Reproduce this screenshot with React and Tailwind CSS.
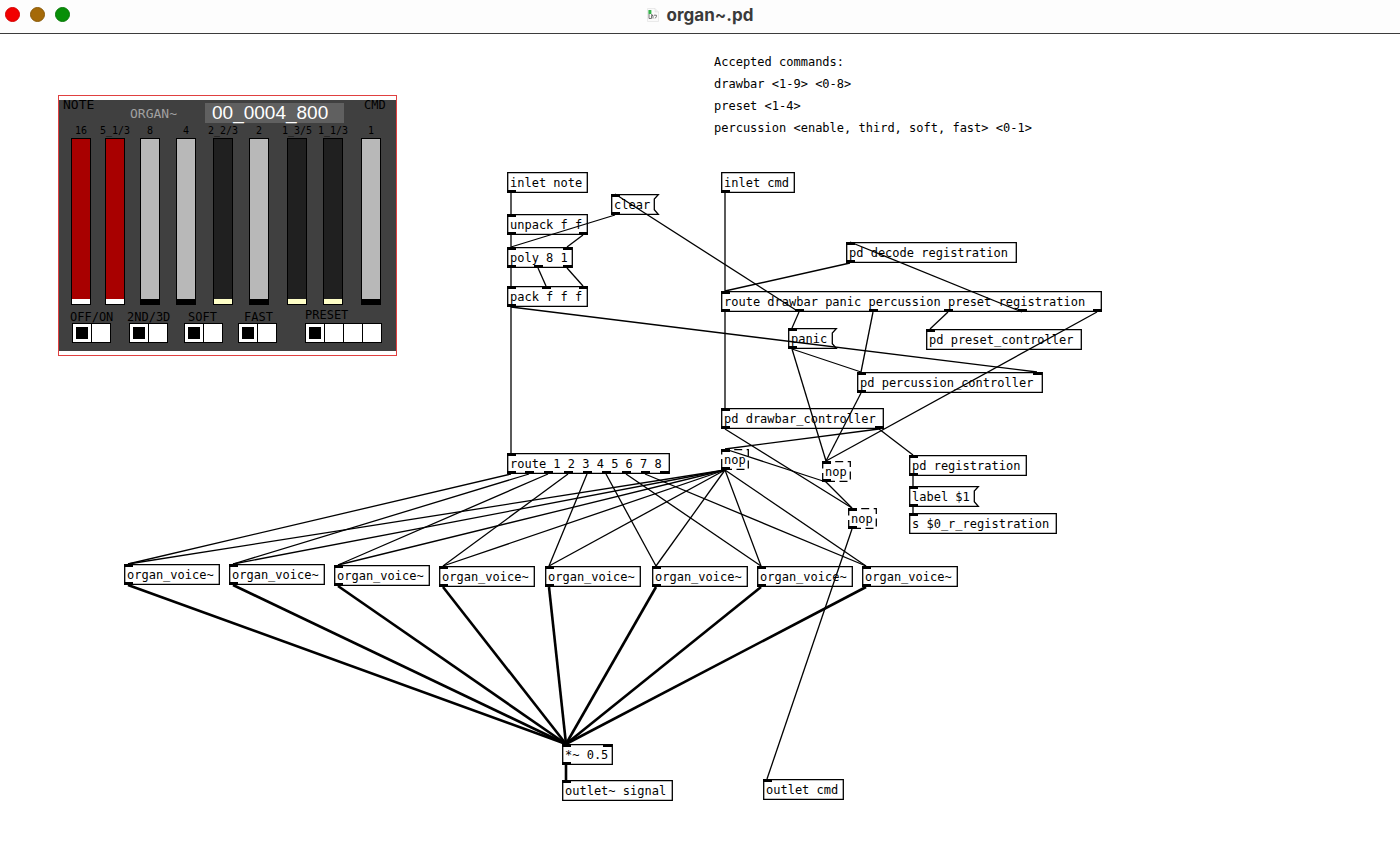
import React from "react";

const BOX_HEIGHT = 21;
const PORT_CENTER = 4;

const voices = [
  [124, 530],
  [229, 530],
  [334, 531],
  [439, 532],
  [545, 532],
  [652, 532],
  [757, 532],
  [862, 532],
].map(([x, y], i) => ({
  id: `voice${i}`,
  text: "organ_voice~",
  x,
  y,
  w: 96,
  ins: [0],
  outs: [0],
}));

const nodes = [
  { id: "inletNote", text: "inlet note", x: 507, y: 138, w: 81, ins: [], outs: [0] },
  { id: "clear", text: "clear", kind: "message", x: 611, y: 160, w: 48, ins: [0], outs: [0] },
  { id: "unpack", text: "unpack f f", x: 507, y: 180, w: 81, ins: [0], outs: [0, 72] },
  { id: "poly", text: "poly 8 1", x: 507, y: 213, w: 66, ins: [0, 56], outs: [0, 27, 56] },
  { id: "pack", text: "pack f f f", x: 507, y: 252, w: 81, ins: [0, 35, 72], outs: [0] },
  { id: "inletCmd", text: "inlet cmd", x: 721, y: 138, w: 74, ins: [], outs: [0] },
  { id: "decode", text: "pd decode registration", x: 846, y: 208, w: 171, ins: [0], outs: [0] },
  {
    id: "routeCmd",
    text: "route drawbar panic percussion preset registration",
    x: 721,
    y: 257,
    w: 381,
    ins: [0],
    outs: [0, 74, 148, 223, 297, 372],
  },
  { id: "panic", text: "panic", kind: "message", x: 788, y: 294, w: 49, ins: [0], outs: [0] },
  { id: "preset", text: "pd preset_controller", x: 926, y: 295, w: 156, ins: [0], outs: [] },
  { id: "percussion", text: "pd percussion_controller", x: 857, y: 338, w: 186, ins: [0, 176], outs: [0] },
  { id: "drawbar", text: "pd drawbar_controller", x: 721, y: 374, w: 163, ins: [0], outs: [0, 154] },
  { id: "nopA", text: "nop", kind: "dashed", x: 721, y: 415, w: 28, ins: [0], outs: [0] },
  { id: "nopB", text: "nop", kind: "dashed", x: 822, y: 427, w: 29, ins: [0], outs: [0] },
  { id: "nopC", text: "nop", kind: "dashed", x: 848, y: 474, w: 29, ins: [0], outs: [0] },
  { id: "registration", text: "pd registration", x: 909, y: 421, w: 118, ins: [0], outs: [0] },
  { id: "label", text: "label $1", kind: "message", x: 909, y: 452, w: 70, ins: [0], outs: [0] },
  { id: "send", text: "s $0_r_registration", x: 909, y: 479, w: 148, ins: [0], outs: [] },
  {
    id: "routeVoice",
    text: "route 1 2 3 4 5 6 7 8",
    x: 507,
    y: 419,
    w: 163,
    ins: [0],
    outs: [0, 18, 37, 57, 76, 95, 115, 134, 153],
  },
  ...voices,
  { id: "gain", text: "*~ 0.5", x: 562, y: 710, w: 51, ins: [0, 41], outs: [0] },
  { id: "outletSignal", text: "outlet~ signal", x: 562, y: 746, w: 111, ins: [0], outs: [] },
  { id: "outletCmd", text: "outlet cmd", x: 763, y: 745, w: 81, ins: [0], outs: [] },
];

const byId = Object.fromEntries(nodes.map((n) => [n.id, n]));

// Each cable is [source, outlet, target, inlet].
const cables = [
  ["inletNote", 0, "unpack", 0],
  ["unpack", 0, "poly", 0],
  ["unpack", 1, "poly", 1],
  ["clear", 0, "poly", 0],
  ["poly", 0, "pack", 0],
  ["poly", 1, "pack", 1],
  ["poly", 2, "pack", 2],
  ["pack", 0, "routeVoice", 0],
  ["pack", 0, "percussion", 1],
  ["inletCmd", 0, "routeCmd", 0],
  ["decode", 0, "routeCmd", 0],
  ["routeCmd", 0, "drawbar", 0],
  ["routeCmd", 1, "panic", 0],
  ["routeCmd", 1, "clear", 0],
  ["routeCmd", 2, "percussion", 0],
  ["routeCmd", 3, "preset", 0],
  ["routeCmd", 4, "decode", 0],
  ["routeCmd", 5, "nopB", 0],
  ["panic", 0, "percussion", 0],
  ["panic", 0, "nopB", 0],
  ["percussion", 0, "nopB", 0],
  ["drawbar", 0, "nopC", 0],
  ["drawbar", 1, "nopA", 0],
  ["drawbar", 1, "registration", 0],
  ["nopB", 0, "nopA", 0],
  ["nopB", 0, "nopC", 0],
  ["nopC", 0, "outletCmd", 0],
  ["registration", 0, "label", 0],
  ["label", 0, "send", 0],
  ...voices.map((v, i) => ["routeVoice", i, v.id, 0]),
  ...voices.map((v) => ["nopA", 0, v.id, 0]),
];

const signalCables = [
  ...voices.map((v) => [v.id, 0, "gain", 0]),
  ["gain", 0, "outletSignal", 0],
];

function Cable({ cable, signal }) {
  const [from, out, to, inlet] = cable;
  const a = byId[from];
  const b = byId[to];
  return (
    <line
      x1={a.x + a.outs[out] + PORT_CENTER}
      y1={a.y + BOX_HEIGHT}
      x2={b.x + b.ins[inlet] + PORT_CENTER}
      y2={b.y}
      stroke="black"
      strokeWidth={signal ? 2.6 : 1.3}
    />
  );
}

function Outline({ kind, w }) {
  const r = w - 0.7;
  const b = BOX_HEIGHT - 0.7;
  const n = r - 4;
  const d =
    kind === "message"
      ? `M.7 .7H${r}L${n} 5V${b - 4.5}L${r} ${b}H.7Z`
      : `M.7 .7H${r}V${b}H.7Z`;
  return (
    <svg className="absolute inset-0 size-full overflow-visible" aria-hidden="true">
      <path
        d={d}
        fill="none"
        stroke="black"
        strokeWidth="1.3"
        strokeDasharray={kind === "dashed" ? "8 4.5" : undefined}
      />
    </svg>
  );
}

function Node({ node }) {
  return (
    <div
      className="absolute flex h-[21px] items-center pl-[3px] whitespace-pre"
      style={{ left: node.x, top: node.y, width: node.w }}
    >
      <Outline kind={node.kind} w={node.w} />
      {node.ins.map((x) => (
        <i key={`in${x}`} className="absolute top-0 h-[3px] w-[9px] bg-black" style={{ left: x }} />
      ))}
      {node.outs.map((x) => (
        <i key={`out${x}`} className="absolute bottom-0 h-[3px] w-[9px] bg-black" style={{ left: x }} />
      ))}
      <span>{node.text}</span>
    </div>
  );
}

const RED = "bg-[#a80000] [&::-webkit-slider-thumb]:bg-white";
const LIGHT = "bg-[#b8b8b8] [&::-webkit-slider-thumb]:bg-black";
const DARK = "bg-[#202020] [&::-webkit-slider-thumb]:bg-[#ffffc8]";

const drawbars = [
  ["16", RED],
  ["5_1/3", RED],
  ["8", LIGHT],
  ["4", LIGHT],
  ["2_2/3", DARK],
  ["2", LIGHT],
  ["1_3/5", DARK],
  ["1_1/3", DARK],
  ["1", LIGHT],
];

const switches = [
  ["OFF/ON", 2, "-ml-0.5"],
  ["2ND/3D", 2, "-ml-0.5"],
  ["SOFT", 2, "ml-1"],
  ["FAST", 2, "ml-1.5"],
  ["PRESET", 4, "relative bottom-0.5"],
];

function Drawbar({ name, color }) {
  const id = `drawbar-${name.replace("/", "-")}`;
  return (
    <div className="flex w-5 flex-col items-center">
      <label htmlFor={id} className="text-[10px] leading-[14px] whitespace-nowrap">
        {name}
      </label>
      <input
        id={id}
        type="range"
        min="0"
        max="8"
        defaultValue="0"
        className={`h-[167px] w-5 appearance-none border border-black [direction:rtl] [writing-mode:vertical-lr] [&::-webkit-slider-thumb]:h-[5px] [&::-webkit-slider-thumb]:w-[18px] [&::-webkit-slider-thumb]:appearance-none ${color}`}
      />
    </div>
  );
}

function Switch({ name, count, labelClass }) {
  const id = `switch-${name.replace("/", "-")}`;
  return (
    <div role="radiogroup" aria-labelledby={id} className="flex flex-col items-start">
      <span id={id} className={`text-xs leading-3 ${labelClass}`}>
        {name}
      </span>
      <div className="flex gap-px border border-black bg-black">
        {Array.from({ length: count }, (_, i) => (
          <input
            key={i}
            type="radio"
            name={id}
            aria-label={`${name} ${i}`}
            defaultChecked={i === 0}
            className="size-[18px] appearance-none bg-white checked:border-[3px] checked:border-white checked:bg-black"
          />
        ))}
      </div>
    </div>
  );
}

function OrganPanel() {
  return (
    <section
      aria-label="Organ"
      className="absolute top-[61px] left-[58px] w-[339px] border border-[#e04040] bg-white py-1"
    >
      <div className="h-[251px] bg-[#404040]">
        <div className="flex h-[24px] items-start pt-[3px] pl-1">
          <span className="-mt-[5px] w-[67px] text-[13px] leading-[14px]">NOTE</span>
          <span className="w-[75px] pt-1 text-[13px] leading-[14px] text-[#a0a0a0]">ORGAN~</span>
          <output className="h-5 w-[139px] bg-[#606060] pl-[7px] font-['Liberation_Sans',sans-serif] text-[19px] leading-5 text-white">
            00_0004_800
          </output>
          <span className="-mt-[5px] ml-5 text-xs leading-[14px]">CMD</span>
        </div>
        <div className="grid grid-cols-[34px_35px_36px_37px_36px_38px_36px_38px_20px] pl-3">
          {drawbars.map(([name, color]) => (
            <Drawbar key={name} name={name} color={color} />
          ))}
        </div>
        <div className="mt-[6px] grid grid-cols-[57px_55px_54px_67px_77px] pl-[13px]">
          {switches.map(([name, count, labelClass]) => (
            <Switch key={name} name={name} count={count} labelClass={labelClass} />
          ))}
        </div>
      </div>
    </section>
  );
}

function FileIcon() {
  return (
    <svg viewBox="0 0 12 14" className="h-[14px] w-3" aria-hidden="true">
      <path d="M.5 .5H8L11.5 4V13.5H.5Z" fill="#fafafa" stroke="#e2e2e2" strokeWidth=".7" />
      <path d="M8 .5V4H11.5" fill="#eee" stroke="#ddd" strokeWidth=".5" />
      <rect x="1.4" y="2" width="3" height="4" rx=".6" fill="#35b34a" />
      <path d="M2 6V10.5H4.5V7.5H6V10.5M7 7.2H9.4V8.6L8.2 10.4M4 6.4L6 7.4" fill="none" stroke="#666" strokeWidth=".9" />
    </svg>
  );
}

export default function App() {
  return (
    <div className="flex min-h-screen flex-col bg-white text-black">
      <header className="grid h-[34px] grid-cols-[1fr_auto_1fr] items-center border-b border-[#3c3c3c] bg-[#fdfdfd] pb-1">
        <div className="flex gap-[10px] pl-[5px]">
          <button aria-label="Close" className="size-[15px] rounded-full border border-[#d40000] bg-[#f20000]" />
          <button aria-label="Minimize" className="size-[15px] rounded-full border border-[#8a5a08] bg-[#a56a08]" />
          <button aria-label="Zoom" className="size-[15px] rounded-full border border-[#087808] bg-[#078f07]" />
        </div>
        <h1 className="flex items-center gap-2 font-['Inter',sans-serif] text-[17px] leading-6 font-bold text-[#3a3a3a]">
          <FileIcon />
          organ~.pd
        </h1>
      </header>
      <main className="relative min-h-[812px] flex-1 overflow-hidden font-['DejaVu_Sans_Mono',monospace] text-xs">
        <div className="absolute top-[17px] left-[714px] flex flex-col whitespace-pre">
          <p className="leading-[22px]">Accepted commands:</p>
          <p className="leading-[22px]">{"drawbar <1-9> <0-8>"}</p>
          <p className="leading-[22px]">{"preset <1-4>"}</p>
          <p className="leading-[22px]">{"percussion <enable, third, soft, fast> <0-1>"}</p>
        </div>
        <OrganPanel />
        {nodes.map((node) => (
          <Node key={node.id} node={node} />
        ))}
        <svg className="pointer-events-none absolute inset-0 size-full" aria-hidden="true">
          {cables.map((c) => (
            <Cable key={c.join()} cable={c} />
          ))}
          {signalCables.map((c) => (
            <Cable key={c.join()} cable={c} signal />
          ))}
        </svg>
      </main>
    </div>
  );
}
